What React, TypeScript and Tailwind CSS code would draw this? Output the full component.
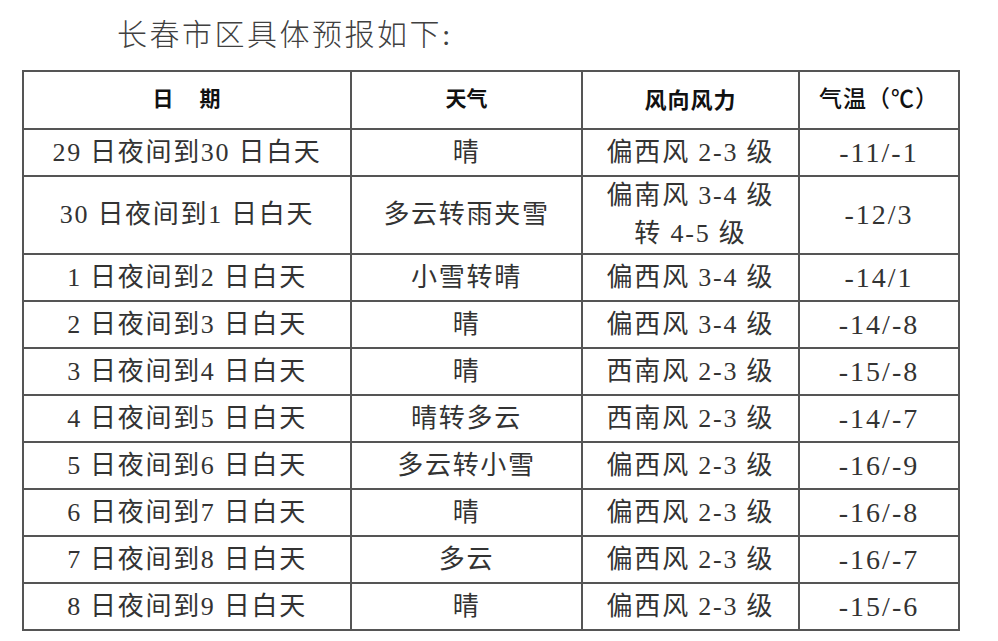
import React from "react";

const rows: { date: string; weather: string; wind: string[]; temp: string; tall?: boolean }[] = [
  { date: "29 日夜间到30 日白天", weather: "晴", wind: ["偏西风 2-3 级"], temp: "-11/-1" },
  { date: "30 日夜间到1 日白天", weather: "多云转雨夹雪", wind: ["偏南风 3-4 级", "转 4-5 级"], temp: "-12/3", tall: true },
  { date: "1 日夜间到2 日白天", weather: "小雪转晴", wind: ["偏西风 3-4 级"], temp: "-14/1" },
  { date: "2 日夜间到3 日白天", weather: "晴", wind: ["偏西风 3-4 级"], temp: "-14/-8" },
  { date: "3 日夜间到4 日白天", weather: "晴", wind: ["西南风 2-3 级"], temp: "-15/-8" },
  { date: "4 日夜间到5 日白天", weather: "晴转多云", wind: ["西南风 2-3 级"], temp: "-14/-7" },
  { date: "5 日夜间到6 日白天", weather: "多云转小雪", wind: ["偏西风 2-3 级"], temp: "-16/-9" },
  { date: "6 日夜间到7 日白天", weather: "晴", wind: ["偏西风 2-3 级"], temp: "-16/-8" },
  { date: "7 日夜间到8 日白天", weather: "多云", wind: ["偏西风 2-3 级"], temp: "-16/-7" },
  { date: "8 日夜间到9 日白天", weather: "晴", wind: ["偏西风 2-3 级"], temp: "-15/-6" },
];

const font = { fontFamily: '"Liberation Serif", "Noto Sans CJK SC", serif' };

export default function App() {
  return (
    <div className="w-[998px] h-[641px] bg-white overflow-hidden" style={font}>
      <div className="pt-[16px] pl-[117px] h-[70px] text-[30px] leading-[38px] tracking-[2.5px] text-[#404040] font-light">
        长春市区具体预报如下:
      </div>
      <table className="ml-[22px] w-[936px] border-collapse table-fixed text-[#333]">
        <colgroup>
          <col className="w-[328px]" />
          <col className="w-[231px]" />
          <col className="w-[217px]" />
          <col className="w-[160px]" />
        </colgroup>
        <thead>
          <tr className="h-[58px]">
            <th className="border-2 border-[#555] text-[21px] font-bold text-[#111] tracking-[1px]">日&nbsp;&nbsp;&nbsp;&nbsp;期</th>
            <th className="border-2 border-[#555] text-[21px] font-bold text-[#111]">天气</th>
            <th className="border-2 border-[#555] text-[22px] font-bold text-[#111] tracking-[1px]">风向风力</th>
            <th className="border-2 border-[#555] text-[23px] font-medium text-[#111] tracking-[1px]">气温（℃）</th>
          </tr>
        </thead>
        <tbody>
          {rows.map((r, i) => (
            <tr key={i} className={r.tall ? "h-[75px]" : "h-[47px]"}>
              <td className="border-2 border-[#555] text-center text-[26px] tracking-[1.7px] leading-[38px] p-0">{r.date}</td>
              <td className="border-2 border-[#555] text-center text-[26px] tracking-[1.7px] leading-[38px] p-0">{r.weather}</td>
              <td className="border-2 border-[#555] text-center text-[26px] tracking-[1.8px] leading-[38px] p-0">
                {r.wind.map((w, j) => (
                  <div key={j}>{w}</div>
                ))}
              </td>
              <td className="border-2 border-[#555] text-center text-[28px] tracking-[2px] leading-[38px] p-0">{r.temp}</td>
            </tr>
          ))}
        </tbody>
      </table>
    </div>
  );
}
